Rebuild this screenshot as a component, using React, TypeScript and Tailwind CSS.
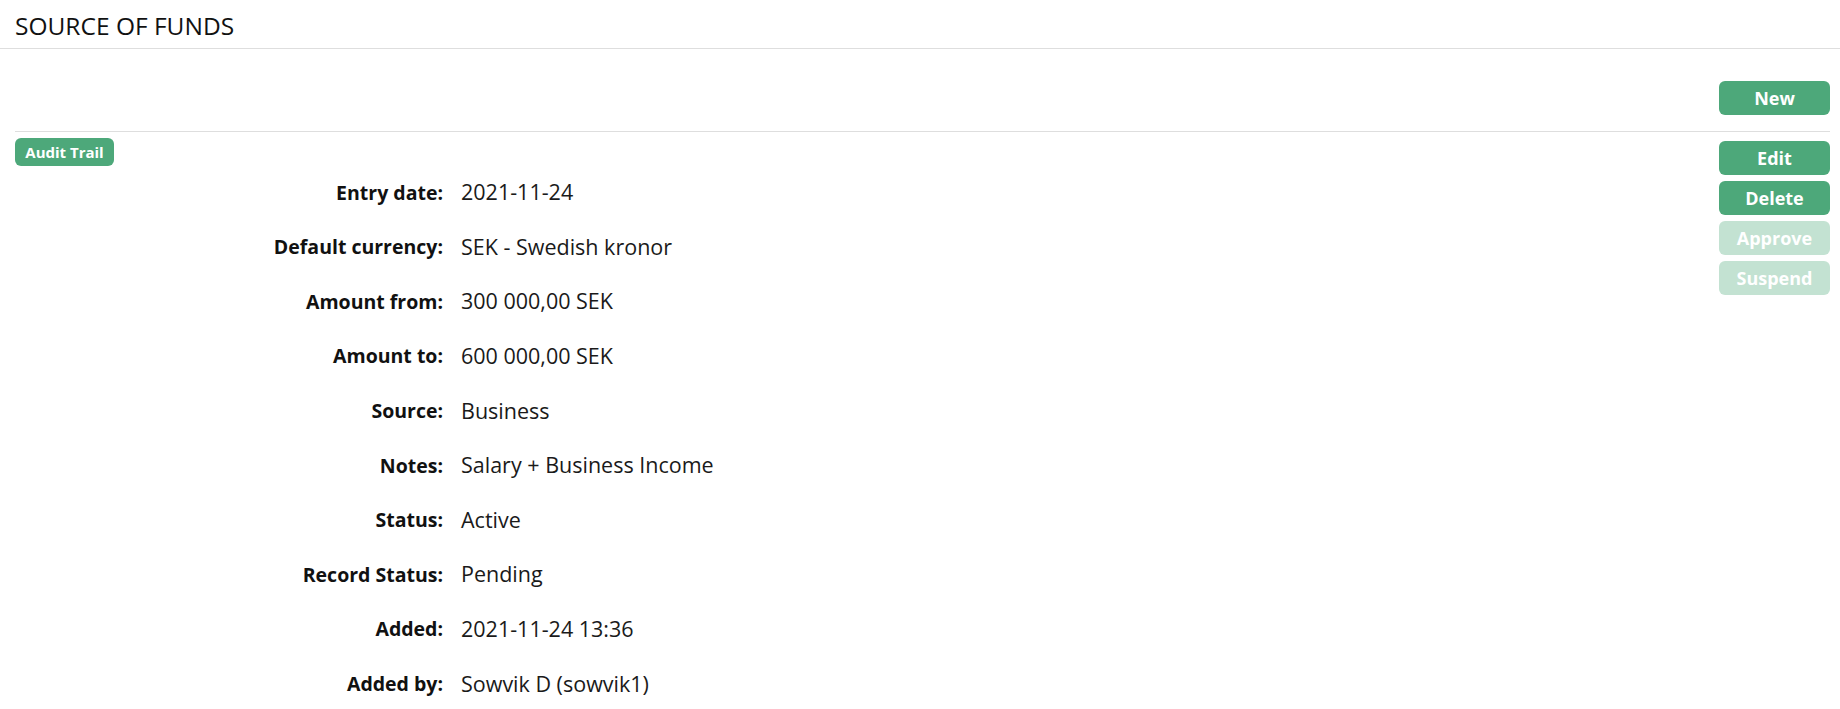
import React from "react";

const rows: [string, string][] = [
  ["Entry date:", "2021-11-24"],
  ["Default currency:", "SEK - Swedish kronor"],
  ["Amount from:", "300 000,00\u00a0SEK"],
  ["Amount to:", "600 000,00\u00a0SEK"],
  ["Source:", "Business"],
  ["Notes:", "Salary + Business Income"],
  ["Status:", "Active"],
  ["Record Status:", "Pending"],
  ["Added:", "2021-11-24 13:36"],
  ["Added by:", "Sowvik D (sowvik1)"],
];

export default function App() {
  return (
    <div
      className="w-[1840px] h-[709px] overflow-hidden bg-white text-[#111]"
      style={{ fontFamily: "'Open Sans', 'Noto Sans', sans-serif" }}
    >
      <div className="h-[49px] border-b border-[#dedede] px-[15px] pt-[11px]">
        <h1 className="text-[24.5px] leading-[30px] font-normal">SOURCE OF FUNDS</h1>
      </div>
      <div className="pl-[15px] pr-[10px]">
        <div className="flex justify-end pt-[32px] pb-[16px] border-b border-[#dedede]">
          <button className="w-[111px] h-[34px] rounded-[6px] bg-[#4da87a] text-white font-bold text-[18px]">
            New
          </button>
        </div>
        <div className="flex">
          <div className="flex-1">
            <button className="mt-[6px] w-[99px] h-[28px] rounded-[6px] bg-[#4da87a] text-white font-bold text-[15px]">
              Audit Trail
            </button>
            <div className="flex flex-col -mt-[1px]">
              {rows.map(([k, v]) => (
                <div key={k} className="flex h-[54.6px] items-center">
                  <div className="w-[428px] text-right font-bold text-[19.5px]">{k}</div>
                  <div className="pl-[18px] text-[21.5px] text-[#1a1a1a]">{v}</div>
                </div>
              ))}
            </div>
          </div>
          <div className="flex flex-col gap-[6px] pt-[9px]">
            <button className="w-[111px] h-[34px] rounded-[6px] bg-[#4da87a] text-white font-bold text-[18px]">
              Edit
            </button>
            <button className="w-[111px] h-[34px] rounded-[6px] bg-[#4da87a] text-white font-bold text-[18px]">
              Delete
            </button>
            <button className="w-[111px] h-[34px] rounded-[6px] bg-[#c3e2d2] text-white font-bold text-[18px]">
              Approve
            </button>
            <button className="w-[111px] h-[34px] rounded-[6px] bg-[#c3e2d2] text-white font-bold text-[18px]">
              Suspend
            </button>
          </div>
        </div>
      </div>
    </div>
  );
}
